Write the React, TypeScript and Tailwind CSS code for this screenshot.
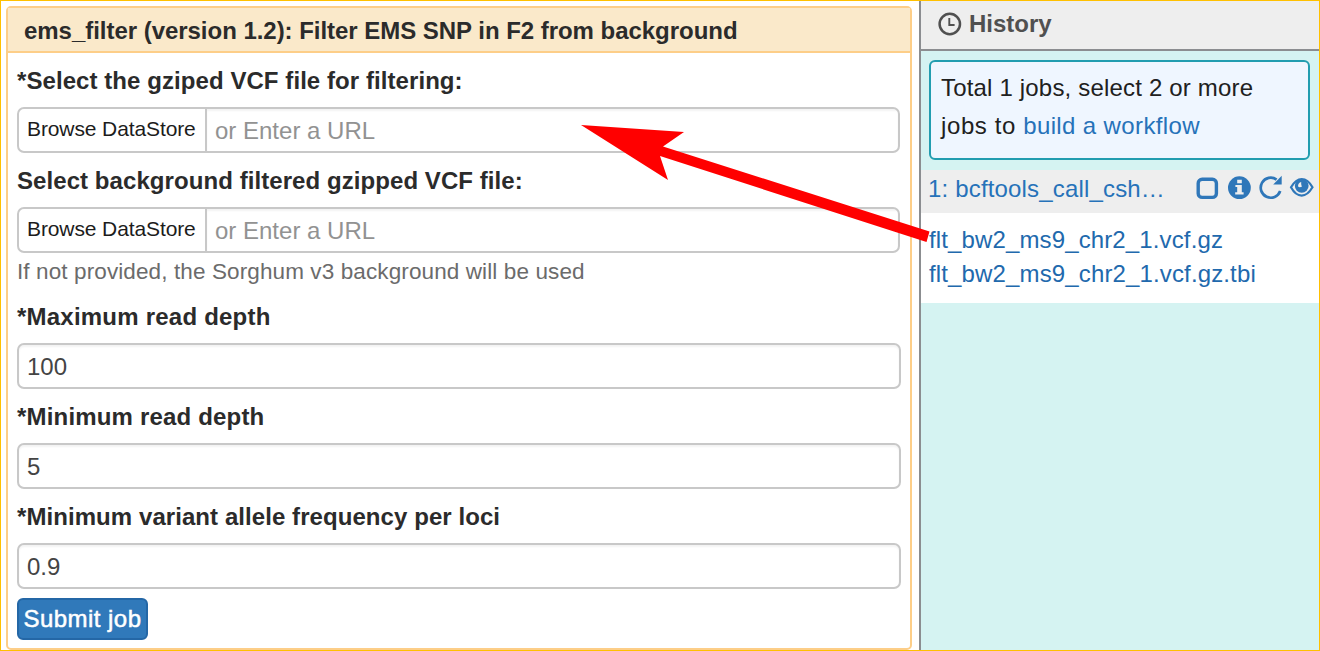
import type { ReactNode } from "react";

const inputShadow = "shadow-[inset_0_2px_2px_rgba(0,0,0,0.05)]";

function Label({ children, className = "tracking-[0.07px]" }: { children: ReactNode; className?: string }) {
  return (
    <label className="flex h-[54px] items-center whitespace-nowrap pt-[2px] text-[24px] font-bold text-[#2b2b2b]">
      <span className={className}>{children}</span>
    </label>
  );
}

function FileField() {
  return (
    <div className="flex h-[46px] w-[883px] overflow-hidden rounded-[7px] border-2 border-[#c8c8c8] bg-white">
      <button className="flex w-[188px] shrink-0 items-center whitespace-nowrap border-r-2 border-[#c8c8c8] pb-[2px] pl-[8px] text-[21px] text-[#1c1c1c]">
        <span className="tracking-[-0.11px]">Browse DataStore</span>
      </button>
      <div className={`flex flex-1 items-center whitespace-nowrap pl-[8px] pt-[2px] text-[24px] text-[#929292] ${inputShadow}`}>
        <span>or Enter a URL</span>
      </div>
    </div>
  );
}

function TextField({ value }: { value: string }) {
  return (
    <div className={`flex h-[46px] w-[884px] items-center rounded-[7px] border-2 border-[#c8c8c8] bg-white pl-[8px] pt-[2px] text-[24px] text-[#444] ${inputShadow}`}>
      {value}
    </div>
  );
}

function ClockIcon() {
  return (
    <svg width="24" height="24" viewBox="0 0 24 24" fill="none" stroke="#505050">
      <circle cx="11.8" cy="12" r="10.2" strokeWidth="2.5" />
      <path d="M11.3 6V13H16.6" strokeWidth="1.9" />
    </svg>
  );
}

function JobIcons() {
  return (
    <svg width="120" height="26" viewBox="0 0 120 26" fill="none" className="shrink-0">
      <rect x="4.2" y="4.2" width="18.2" height="18.2" rx="4" stroke="#2f77b9" strokeWidth="3.4" />
      <circle cx="45.4" cy="12.7" r="11.4" fill="#2f77b9" />
      <path d="M43.2 4.8H47.8V8.2H43.2ZM41.4 10.1H47.8V17.2H49.6V19.5H41.2V17.2H43.2V12.1H41.4Z" fill="#eee" />
      <path d="M86.2 16A10 10 0 1 1 82.6 4.6" stroke="#2f77b9" strokeWidth="2.7" />
      <path d="M87.7 0.7V9.4H79.2Z" fill="#2f77b9" />
      <path d="M97 12.3C100.2 6.8 103.8 4 107.7 4C111.8 4 115.5 6.8 118.5 12.3C115.2 17.8 111.6 20.6 107.7 20.6C103.8 20.6 100 17.8 97 12.3Z" stroke="#2f77b9" strokeWidth="2.2" />
      <circle cx="107.7" cy="10.8" r="6.9" fill="#2f77b9" />
      <path d="M104 11.2C104 8.8 105.2 7.3 107.2 6.9C106.9 9.8 107.8 10.8 108 11.6C106.4 12.6 104.6 12.4 104 11.2Z" fill="#eee" />
    </svg>
  );
}

export default function App() {
  return (
    <div className="relative flex h-[651px] w-[1320px] overflow-hidden border border-[#ffc000] bg-white font-['Liberation_Sans',Arial,sans-serif]">
      <main className="w-[918px] shrink-0 pl-[5px] pt-[5px]">
        <section className="h-[644px] w-[906px] rounded-[5px] border-2 border-[#fdce88]">
          <h1 className="flex h-[45px] items-center whitespace-nowrap border-b-2 border-[#fdce88] bg-[#fae9ca] pl-[16px] pt-[3px] text-[24px] font-bold text-[#2b2b2b]">
            <span className="tracking-[-0.035px]">ems_filter (version 1.2): Filter EMS SNP in F2 from background</span>
          </h1>
          <form className="flex flex-col items-start pl-[9px]">
            <Label>*Select the gziped VCF file for filtering:</Label>
            <FileField />
            <Label>Select background filtered gzipped VCF file:</Label>
            <FileField />
            <p className="flex h-[36px] items-center whitespace-nowrap pt-[2px] text-[22.5px] text-[#6b6b6b]">
              <span className="tracking-[0.11px]">If not provided, the Sorghum v3 background will be used</span>
            </p>
            <Label className="tracking-[0.22px]">*Maximum read depth</Label>
            <TextField value="100" />
            <Label className="tracking-[0.18px]">*Minimum read depth</Label>
            <TextField value="5" />
            <Label>*Minimum variant allele frequency per loci</Label>
            <TextField value="0.9" />
            <button className="mt-[9px] flex h-[42px] w-[131px] items-center justify-center whitespace-nowrap rounded-[6px] border-2 border-[#2467a6] bg-[#3079ba] text-[24px] text-white [-webkit-text-stroke:0.5px_white]">
              <span className="tracking-[0.45px]">Submit job</span>
            </button>
          </form>
        </section>
      </main>

      <aside className="flex w-[400px] shrink-0 flex-col border-l-2 border-[#8b8d90] bg-[#d5f3f2]">
        <header className="flex h-[50px] items-center gap-[7px] border-b-2 border-[#8b8d90] bg-[#eee] pb-[3px] pl-[17px] text-[24px] font-bold text-[#505050]">
          <ClockIcon />
          <span>History</span>
        </header>
        <div className="ml-[8px] mt-[9px] h-[100px] w-[381px] whitespace-nowrap rounded-[6px] border-2 border-[#229db0] bg-[#eff6ff] pl-[10px] pt-[7px] text-[24px] leading-[38px] text-[#202020]">
          <p><span className="tracking-[0.18px]">Total 1 jobs, select 2 or more</span></p>
          <p><span className="tracking-[0.6px]">jobs to </span><a className="tracking-[0.38px] text-[#2672b9]">build a workflow</a></p>
        </div>
        <div className="mt-[10px] flex h-[43px] items-center justify-between bg-[#eee] pb-[7px] pl-[7px] pr-[5px] text-[24px] text-[#2672b9]">
          <span className="whitespace-nowrap pt-[2px] tracking-[0.17px]">1: bcftools_call_csh…</span>
          <JobIcons />
        </div>
        <div className="h-[90px] whitespace-nowrap bg-white pl-[8px] pt-[10px] text-[24px] leading-[34px] text-[#2169ad]">
          <p><span className="tracking-[0.13px]">flt_bw2_ms9_chr2_1.vcf.gz</span></p>
          <p><span className="tracking-[0.14px]">flt_bw2_ms9_chr2_1.vcf.gz.tbi</span></p>
        </div>
      </aside>

      <svg className="pointer-events-none absolute left-[-1px] top-[-1px]" width="1320" height="651" viewBox="0 0 1320 651">
        <path d="M581 125L684 132L663 146.5L929.5 231.5L926.5 242L660 156L668 180Z" fill="#f00" />
      </svg>
    </div>
  );
}
